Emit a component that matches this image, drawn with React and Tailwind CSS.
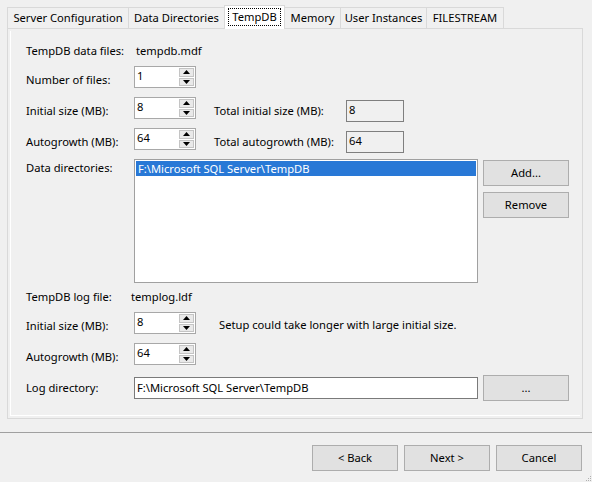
import React from "react";

function Arrow({ up }) {
  return (
    <div className="flex-1 border border-[#c4c4c4] bg-[#e9e9e9] flex items-center justify-center">
      <svg width="7" height="4" viewBox="0 0 7 4">
        {up ? <polygon points="3.5,0 7,4 0,4" fill="#000" /> : <polygon points="0,0 7,0 3.5,4" fill="#000" />}
      </svg>
    </div>
  );
}

function Spinner({ value }) {
  return (
    <div className="w-[62px] h-[22px] border border-[#a8a8a8] bg-white flex shrink-0">
      <div className="flex-1 pl-[2px] pt-[1px] leading-[16px]">{value}</div>
      <div className="w-[16px] flex flex-col gap-[1px] py-[1px] pr-[1px]">
        <Arrow up />
        <Arrow />
      </div>
    </div>
  );
}

function Btn({ children, className = "" }) {
  return (
    <div className={"w-[86px] h-[26px] border border-[#adadad] bg-[#e1e1e1] flex items-center justify-center shrink-0 " + className}>
      {children}
    </div>
  );
}

function Tab({ children, w, active, first }) {
  if (active) {
    return (
      <div className={"relative z-10 -ml-px mb-[-1px] h-[24px] border-l border-t border-r border-[#d9d9d9] bg-white flex items-start justify-center pt-[2px] " + w}>
        <div className="border border-dotted border-black px-[3px] h-[18px] leading-[16px]">{children}</div>
      </div>
    );
  }
  return (
    <div className={(first ? "" : "-ml-px ") + "h-[21px] border-l border-t border-r border-[#d9d9d9] bg-[#f0f0f0] flex items-center justify-center " + w}>
      {children}
    </div>
  );
}

export default function App() {
  return (
    <div className="relative w-[592px] h-[482px] bg-[#f0f0f0] text-black text-[11.2px] leading-[16px] font-['Noto_Sans',sans-serif] overflow-hidden">
      {/* tabs */}
      <div className="h-[28px] flex items-end pl-[7px]">
        <Tab w="w-[122px]" first>Server Configuration</Tab>
        <Tab w="w-[97px]">Data Directories</Tab>
        <Tab w="w-[61px]" active>TempDB</Tab>
        <Tab w="w-[57px]">Memory</Tab>
        <Tab w="w-[87px]">User Instances</Tab>
        <Tab w="w-[78px]">FILESTREAM</Tab>
      </div>

      {/* panel */}
      <div className="ml-[7px] w-[576px] h-[391px] border border-[#d9d9d9] p-[2px]">
        <div className="w-full h-full border-l border-b border-white pl-[15px] pt-[12px] flex flex-col">
          {/* row 1 */}
          <div className="flex h-[16px]">
            <div className="w-[110px]">TempDB data files:</div>
            <div>tempdb.mdf</div>
          </div>
          {/* row 2 */}
          <div className="flex h-[22px] mt-[7px]">
            <div className="w-[108px] pt-[6px]">Number of files:</div>
            <Spinner value="1" />
          </div>
          {/* row 3 */}
          <div className="flex h-[22px] mt-[9px]">
            <div className="w-[108px] pt-[6px]">Initial size (MB):</div>
            <Spinner value="8" />
            <div className="ml-[18px] w-[132px] pt-[6px]">Total initial size (MB):</div>
            <div className="mt-[3px] w-[58px] h-[22px] border border-[#7f7f7f] pl-[2px] pt-[1px]">8</div>
          </div>
          {/* row 4 */}
          <div className="flex h-[22px] mt-[9px]">
            <div className="w-[108px] pt-[6px]">Autogrowth (MB):</div>
            <Spinner value="64" />
            <div className="ml-[18px] w-[132px] pt-[6px]">Total autogrowth (MB):</div>
            <div className="mt-[3px] w-[58px] h-[22px] border border-[#7f7f7f] pl-[2px] pt-[1px]">64</div>
          </div>
          {/* row 5 */}
          <div className="flex mt-[9px]">
            <div className="w-[108px] pt-[1px]">Data directories:</div>
            <div className="w-[344px] h-[124px] border border-[#a0a0a0] bg-white p-px">
              <div className="h-[15px] bg-[#2878d6] text-white pl-[2px] leading-[15px]">F:\Microsoft SQL Server\TempDB</div>
            </div>
            <div className="ml-[5px] flex flex-col gap-[6px] pt-px">
              <Btn>Add...</Btn>
              <Btn>Remove</Btn>
            </div>
          </div>
          {/* row 6 */}
          <div className="flex h-[16px] mt-[6px]">
            <div className="w-[105px]">TempDB log file:</div>
            <div>templog.ldf</div>
          </div>
          {/* row 7 */}
          <div className="flex h-[22px] mt-[7px]">
            <div className="w-[108px] pt-[6px]">Initial size (MB):</div>
            <Spinner value="8" />
            <div className="ml-[23px] pt-[5px]">Setup could take longer with large initial size.</div>
          </div>
          {/* row 8 */}
          <div className="flex h-[22px] mt-[9px]">
            <div className="w-[108px] pt-[6px]">Autogrowth (MB):</div>
            <Spinner value="64" />
          </div>
          {/* row 9 */}
          <div className="flex items-center h-[26px] mt-[10px]">
            <div className="w-[108px]">Log directory:</div>
            <div className="w-[344px] h-[22px] border border-[#7a7a7a] bg-white pl-[2px] pt-[2px]">F:\Microsoft SQL Server\TempDB</div>
            <Btn className="ml-[5px]">...</Btn>
          </div>
        </div>
      </div>

      {/* separator */}
      <div className="mt-[13px] h-px bg-[#a0a0a0]" />

      {/* bottom buttons */}
      <div className="flex justify-end gap-[6px] pr-[10px] mt-[12px]">
        <Btn>&lt; Back</Btn>
        <Btn>Next &gt;</Btn>
        <Btn>Cancel</Btn>
      </div>

      {/* size grip */}
      <svg className="absolute right-0 bottom-0" width="6" height="6" viewBox="0 0 6 6">
        <rect x="4" y="0" width="1" height="1" fill="#b0b0b0" />
        <rect x="2" y="2" width="1" height="1" fill="#b0b0b0" />
        <rect x="4" y="2" width="1" height="1" fill="#b0b0b0" />
        <rect x="0" y="4" width="1" height="1" fill="#b0b0b0" />
        <rect x="2" y="4" width="1" height="1" fill="#b0b0b0" />
        <rect x="4" y="4" width="1" height="1" fill="#b0b0b0" />
      </svg>
    </div>
  );
}
